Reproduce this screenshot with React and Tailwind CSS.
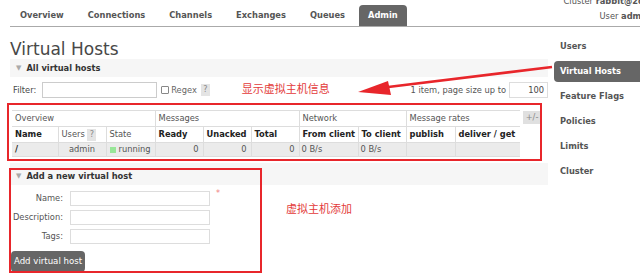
import React from 'react'

const tabs = ['Overview', 'Connections', 'Channels', 'Exchanges', 'Queues', 'Admin']
const side = ['Users', 'Virtual Hosts', 'Feature Flags', 'Policies', 'Limits', 'Cluster']
const cols = [46, 48, 49, 48, 48, 48, 59, 48, 49, 65]

function Help() {
  return <span className="inline-flex items-center justify-center w-[9px] h-[12px] bg-[#e4e4e4] text-[#888] text-[8px] align-middle">?</span>
}

function SectionHead({ title, tall }) {
  return (
    <div className={'flex items-center bg-[#f6f6f6] pl-[6px] gap-[5px] ' + (tall ? 'h-[22px] pt-[4px]' : 'h-[18px]')}>
      <span className="text-[#aaa] text-[7px]">▼</span>
      <span className="font-bold text-[#333]">{title}</span>
    </div>
  )
}

export default function App() {
  const cell = 'border-l border-[#ddd] px-[3px] text-left'
  return (
    <div className="relative w-[640px] h-[276px] overflow-hidden whitespace-nowrap bg-white text-[8.3px] text-[#484848] font-['DejaVu_Sans','Noto_Sans_CJK_SC',sans-serif]">
      {/* top nav */}
      <div className="flex justify-between ml-[10px] h-[27px] border-b border-[#aaa]">
        <div className="flex items-end">
          {tabs.map((t) =>
            t === 'Admin' ? (
              <div key={t} className="ml-[2px] h-[21px] px-[9px] flex items-center rounded-t-[4px] bg-[#666] text-white font-bold">{t}</div>
            ) : (
              <div key={t} className="h-[21px] px-[12px] flex items-center font-bold text-[#555] first:pl-[10px]">{t}</div>
            )
          )}
        </div>
        <div className="-mt-[6px] -mr-[10px] flex flex-col items-end leading-[15px] text-[#555]">
          <div>Cluster <b>rabbit@2dd</b></div>
          <div>User <b>admin</b></div>
        </div>
      </div>

      <div className="flex">
        {/* main */}
        <div className="w-[538px] ml-[10px]">
          <h1 className="text-[17px] leading-[20px] mt-[12px] text-[#484848]">Virtual Hosts</h1>
          <SectionHead title="All virtual hosts" />
          <div className="flex items-center h-[18px] mt-[4px] pl-[3px]">
            <span>Filter:</span>
            <div className="ml-[6px] w-[115px] h-[16px] border border-[#ccc] bg-white" />
            <span className="ml-[4px] w-[8px] h-[8px] border border-[#888] rounded-[1px]" />
            <span className="ml-[2px] mr-[4px] text-[#666]">Regex</span>
            <Help />
            <span className="ml-[32px] text-[11px] text-[#e33a3a]">显示虚拟主机信息</span>
            <span className="ml-auto text-[#555]">1 item, page size up to</span>
            <div className="ml-[3px] w-[39px] h-[16px] border border-[#ddd] text-right pr-[3px] leading-[14px]">100</div>
          </div>

          <div className="flex mt-[11px] ml-[2px] items-start">
            <table className="table-fixed w-[508px] border-collapse text-[#555]">
              <colgroup>
                {cols.map((w, i) => <col key={i} style={{ width: w }} />)}
              </colgroup>
              <thead>
                <tr className="h-[16px] border-t border-[#ddd]">
                  <th colSpan={3} className="px-[3px] text-left font-normal">Overview</th>
                  <th colSpan={3} className={cell + ' font-normal'}>Messages</th>
                  <th colSpan={2} className={cell + ' font-normal'}>Network</th>
                  <th colSpan={2} className={cell + ' font-normal'}>Message rates</th>
                </tr>
                <tr className="h-[16px] border-t border-[#ddd] text-[#222]">
                  <th className="px-[3px] text-left font-bold">Name</th>
                  <th className={cell + ' font-normal text-[#555]'}>Users <Help /></th>
                  <th className={cell + ' font-normal text-[#555]'}>State</th>
                  <th className={cell + ' font-bold'}>Ready</th>
                  <th className={cell + ' font-bold'}>Unacked</th>
                  <th className={cell + ' font-bold'}>Total</th>
                  <th className={cell + ' font-bold'}>From client</th>
                  <th className={cell + ' font-bold'}>To client</th>
                  <th className={cell + ' font-bold'}>publish</th>
                  <th className={cell + ' font-bold'}>deliver / get</th>
                </tr>
              </thead>
              <tbody>
                <tr className="h-[14px] bg-[#ebebeb] border-t border-b border-[#ddd]">
                  <td className="px-[3px] font-bold text-[#222]">/</td>
                  <td className="border-l border-[#ddd] px-[3px] text-center">admin</td>
                  <td className="border-l border-[#ddd] px-[3px]">
                    <span className="inline-block w-[6px] h-[6px] bg-[#98e698] mr-[3px] align-middle" />running
                  </td>
                  <td className="border-l border-[#ddd] px-[4px] text-right">0</td>
                  <td className="border-l border-[#ddd] px-[4px] text-right">0</td>
                  <td className="border-l border-[#ddd] px-[4px] text-right">0</td>
                  <td className="border-l border-[#ddd] px-[2px]">0 B/s</td>
                  <td className="border-l border-[#ddd] px-[2px]">0 B/s</td>
                  <td className="border-l border-[#ddd]" />
                  <td className="border-l border-[#ddd]" />
                </tr>
              </tbody>
            </table>
            <div className="ml-[3px] mt-[1px] w-[18px] h-[13px] bg-[#e0e0e0] text-[#888] flex items-center justify-center">+/-</div>
          </div>

          <div className="mt-[6px]">
            <SectionHead title="Add a new virtual host" tall />
            <div className="flex">
              <div className="flex flex-col gap-[4px] mt-[6px]">
                {['Name:', 'Description:', 'Tags:'].map((l, i) => (
                  <div key={l} className="flex items-center h-[15px]">
                    <span className="w-[53px] text-right text-[#555]">{l}</span>
                    <div className="ml-[7px] w-[140px] h-[15px] border border-[#ddd] bg-white" />
                    {i === 0 && <span className="ml-[6px] -mt-[10px] text-[#f08080] text-[8px]">*</span>}
                  </div>
                ))}
                <div className="mt-[3px] ml-[1px] w-[74px] h-[21px] rounded-[4px] bg-[#666] text-white text-[8.6px] flex items-center justify-center">Add virtual host</div>
              </div>
              <span className="ml-[66px] mt-[17px] text-[11px] text-[#e33a3a] h-[14px]">虚拟主机添加</span>
            </div>
          </div>
        </div>

        {/* sidebar */}
        <div className="ml-auto w-[86px] mt-[7px] flex flex-col">
          {side.map((s) =>
            s === 'Virtual Hosts' ? (
              <div key={s} className="h-[25px] flex items-center">
                <div className="w-full h-[21px] rounded-l-[4px] bg-[#666] text-white font-bold pl-[6px] flex items-center">{s}</div>
              </div>
            ) : (
              <div key={s} className="h-[25px] pl-[6px] flex items-center font-bold text-[#555]">{s}</div>
            )
          )}
        </div>
      </div>

      {/* annotations */}
      <div className="absolute left-[7px] top-[103px] w-[535px] h-[58px] border-2 border-[#e8262b]" />
      <div className="absolute left-[9px] top-[168px] w-[253px] h-[105px] border-2 border-[#e8262b]" />
      <svg className="absolute left-0 top-0" width="640" height="276">
        <line x1="552" y1="67" x2="380" y2="88" stroke="#e8262b" strokeWidth="2.5" />
        <polygon points="358,92 388,81 391,95" fill="#e8262b" />
      </svg>
    </div>
  )
}
